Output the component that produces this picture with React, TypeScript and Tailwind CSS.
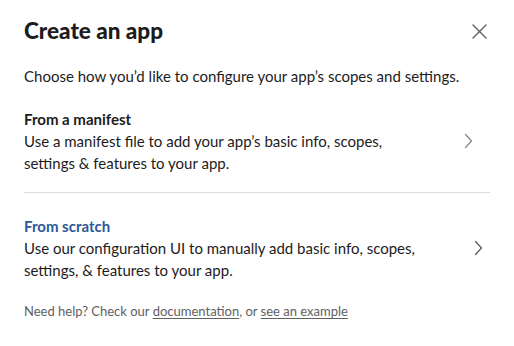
import React from "react";

function Chevron({ className }: { className?: string }) {
  return (
    <svg width="9" height="16" viewBox="0 0 9 16" fill="none" className={className}>
      <polyline points="1.5,1.5 7.5,8 1.5,14.5" stroke="currentColor" strokeWidth="1.3" strokeLinecap="round" strokeLinejoin="round" />
    </svg>
  );
}

export default function App() {
  return (
    <div className="w-[514px] h-[346px] bg-white text-[#1d1c1d] font-['Lato','Noto_Sans',sans-serif] overflow-hidden">
      {/* header */}
      <div className="flex items-center justify-between pl-6 pr-[27px] pt-[17px]">
        <h1 className="text-[22.5px] leading-[28px] font-black">Create an app</h1>
        <button className="text-[#5e5d60]" aria-label="Close">
          <svg width="15" height="15" viewBox="0 0 15 15" fill="none">
            <path d="M1 1L14 14M14 1L1 14" stroke="currentColor" strokeWidth="1.4" strokeLinecap="round" />
          </svg>
        </button>
      </div>

      <p className="pl-6 mt-[20px] text-[15px] leading-[22px]">
        Choose how you’d like to configure your app’s scopes and settings.
      </p>

      {/* options */}
      <div className="mx-6 mt-[21px]">
        <div className="flex items-center pb-[18px] border-b border-[#dddddd]">
          <div className="w-[405px]">
            <div className="text-[15px] leading-[22px] font-bold">From a manifest</div>
            <div className="text-[15px] leading-[22px]">
              Use a manifest file to add your app’s basic info, scopes, settings &amp; features to your app.
            </div>
          </div>
          <div className="flex-1 flex justify-end pr-[17px] text-[#8a898b]">
            <Chevron />
          </div>
        </div>

        <div className="flex items-center pt-[22px]">
          <div className="w-[405px]">
            <div className="text-[15px] leading-[22px] font-bold text-[#2c5897]">From scratch</div>
            <div className="text-[15px] leading-[22px]">
              Use our configuration UI to manually add basic info, scopes, settings, &amp; features to your app.
            </div>
          </div>
          <div className="flex-1 flex justify-end pr-[7px] text-[#5e5d60]">
            <Chevron />
          </div>
        </div>
      </div>

      <p className="pl-6 mt-[21px] text-[13px] leading-[18px] text-[#616061]">
        Need help? Check our <a className="underline underline-offset-2">documentation</a>, or{" "}
        <a className="underline underline-offset-2">see an example</a>
      </p>
    </div>
  );
}
